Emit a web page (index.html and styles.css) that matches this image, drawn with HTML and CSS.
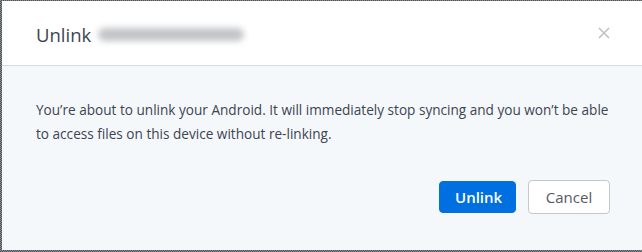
FILE: index.html
```html
<!DOCTYPE html>
<html>
<head>
<meta charset="utf-8">
<link rel="stylesheet" href="styles.css">
</head>
<body>
<div class="frame">
  <div class="dialog">
    <div class="header">
      <div class="title">Unlink<span class="smear"></span></div>
      <svg class="close" width="12" height="12" viewBox="0 0 12 12"><path d="M1 1L11 11M11 1L1 11" stroke="#bfc3c8" stroke-width="1.6" fill="none"/></svg>
    </div>
    <div class="body">
      <p class="text">You’re about to unlink your Android. It will immediately stop syncing and you won’t be able to access files on this device without re-linking.</p>
      <div class="actions">
        <button class="btn primary">Unlink</button>
        <button class="btn secondary">Cancel</button>
      </div>
    </div>
  </div>
</div>
</body>
</html>
```
FILE: styles.css
```css
html, body {
  margin: 0;
  padding: 0;
}
body {
  width: 642px;
  height: 252px;
  overflow: hidden;
  font-family: "Open Sans", "Liberation Sans", sans-serif;
}
.frame {
  width: 642px;
  height: 252px;
  box-sizing: border-box;
  padding: 1px 0 2px 2px;
  background: repeating-conic-gradient(#4a4f55 0 25%, #8a8f94 0 50%) 0 0 / 2px 2px;
}
.dialog {
  height: 100%;
  display: flex;
  flex-direction: column;
  background: #f5f8fb;
}
.header {
  height: 64px;
  background: #ffffff;
  border-bottom: 1px solid #d6d9dd;
  display: flex;
  align-items: center;
  justify-content: space-between;
  padding: 0 32px 0 34px;
}
.title {
  font-size: 18.5px;
  color: #3d4451;
  display: flex;
  align-items: center;
  margin-top: 2px;
}
.smear {
  display: inline-block;
  width: 146px;
  height: 13px;
  margin-left: 7px;
  margin-top: 0px;
  background: #c2c4c7;
  border-radius: 7px;
  filter: blur(3px);
}
.body {
  flex: 1;
  padding: 32px 30px 0 34px;
}
.text {
  margin: 0;
  font-size: 13.6px;
  line-height: 24px;
  color: #3d4451;
}
.actions {
  display: flex;
  justify-content: flex-end;
  gap: 12px;
  margin-top: 34px;
  margin-right: 2px;
}
.btn {
  font-family: inherit;
  font-size: 15px;
  height: 33px;
  border-radius: 4px;
  padding: 0 15px;
  cursor: pointer;
}
.primary {
  background: #0070e0;
  border: 1px solid #0070e0;
  color: #ffffff;
  font-weight: 600;
  width: 77px;
  height: 32px;
  margin-top: 1px;
}
.secondary {
  background: #ffffff;
  border: 1px solid #c4c8cc;
  color: #535a65;
  width: 82px;
  height: 34px;
}
```
